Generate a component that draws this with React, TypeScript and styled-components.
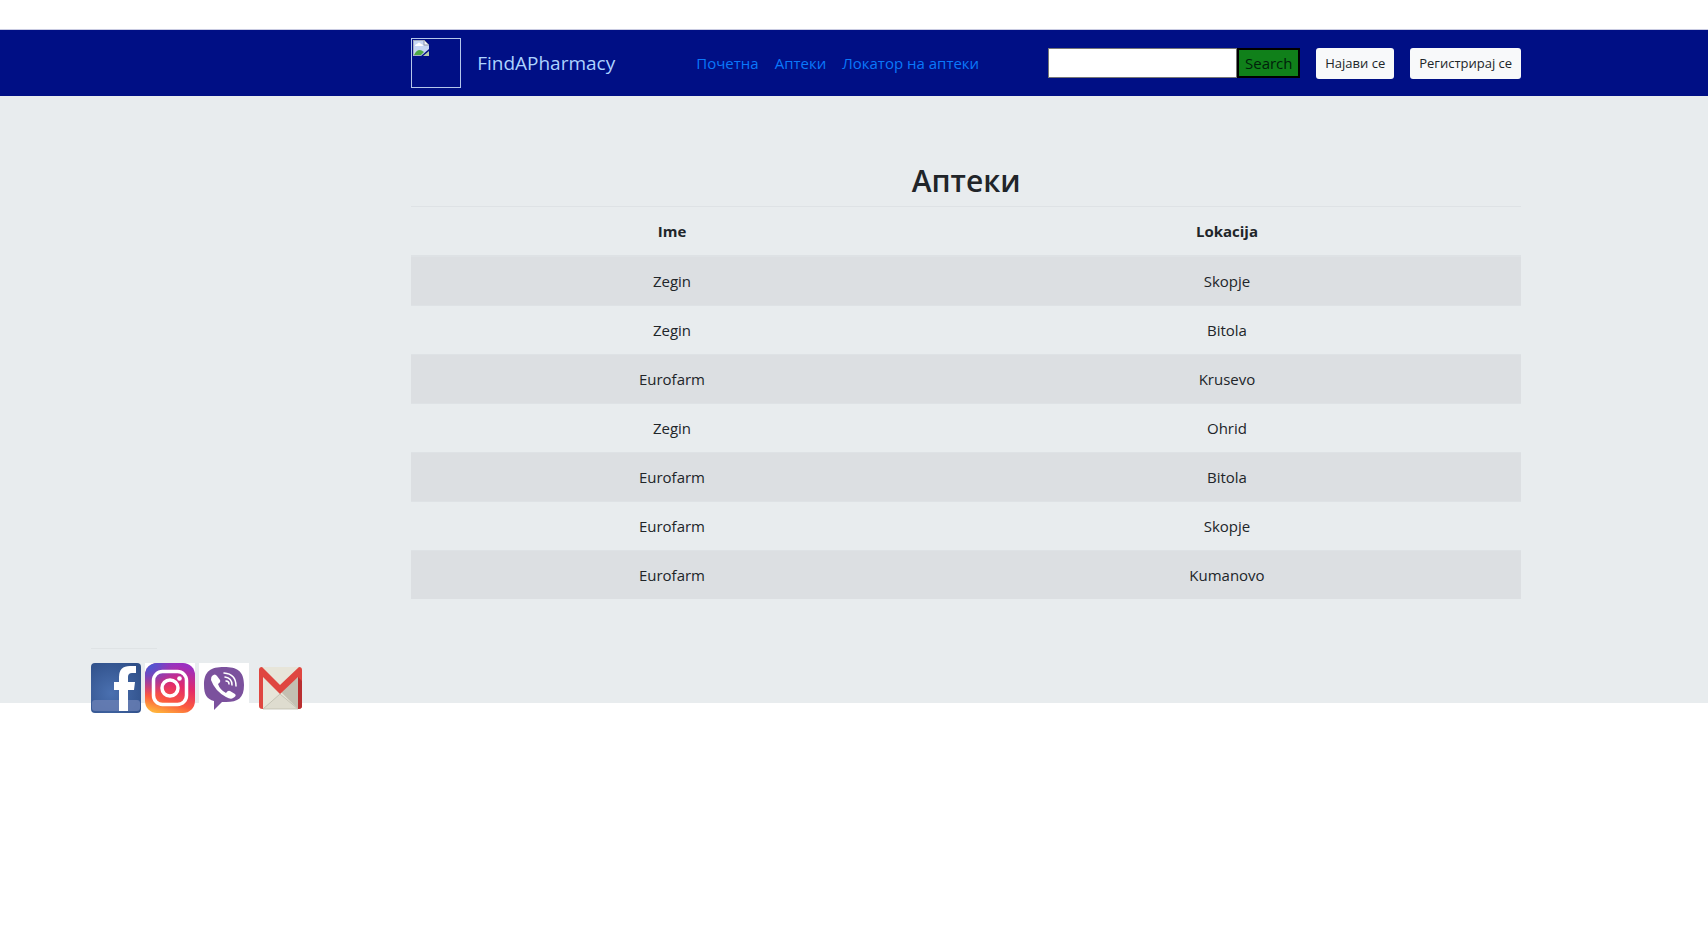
import React from "react";
import styled, { createGlobalStyle } from "styled-components";

const GlobalStyle = createGlobalStyle`
  *, *::before, *::after { box-sizing: border-box; }
  body {
    margin: 0;
    background: #fff;
    color: #212529;
    font-family: "Segoe UI", "Open Sans", sans-serif;
    font-size: 15px;
    line-height: 24px;
  }
`;

const Page = styled.div`
  padding-top: 29px;
`;

const Columns = styled.div`
  display: grid;
  grid-template-columns: 11fr minmax(0, 1110px) 5fr;
  & > * { grid-column: 2; }
`;

const Navbar = styled(Columns).attrs({ as: "header" })`
  padding: 8px 0;
  background: #000f85;
  border-top: 1px solid #c9cbe2;
`;

const NavContent = styled.div`
  display: flex;
  align-items: center;
  justify-content: space-between;
`;

const Brand = styled.a`
  display: flex;
  align-items: center;
  gap: 16px;
  margin-right: 12px;
  color: #add3ff;
  font-size: 19px;
  text-decoration: none;
`;

const BrandImage = styled.span`
  width: 50px;
  height: 50px;
  padding: 1px;
  border: 1px solid #b4c6ea;
  svg { display: block; }
`;

const NavList = styled.ul`
  display: flex;
  gap: 16px;
  margin: 0;
  padding: 0;
  list-style: none;
`;

const NavLink = styled.a`
  color: #0a78fa;
  text-decoration: none;
`;

const Actions = styled.div`
  display: flex;
  align-items: flex-start;
  gap: 16px;
`;

const SearchForm = styled.form`
  display: flex;
`;

const SearchInput = styled.input`
  width: 189px;
  height: 30px;
  border: 1px solid #767676;
  border-radius: 0;
  background: #fff;
  font: inherit;
`;

const SearchButton = styled.button`
  width: 63px;
  height: 30px;
  padding: 0;
  border: 2px solid #000;
  background: #10801a;
  color: #00210a;
  font: inherit;
`;

const LightButton = styled.button`
  height: 31px;
  padding: 0 9px;
  border: 0;
  border-radius: 3px;
  background: #f8f9fa;
  color: #212529;
  font: inherit;
  font-size: 13px;
`;

const Main = styled(Columns).attrs({ as: "main" })`
  padding: 64px 0 104px;
  background: #e8ecee;
`;

const Title = styled.h2`
  margin: 0 0 4px;
  font-size: 30px;
  font-weight: 600;
  line-height: 42px;
  text-align: center;
`;

const Table = styled.table`
  width: 100%;
  border-collapse: separate;
  border-spacing: 0;
  text-align: center;
  th, td {
    padding: 12px;
    border-top: 1px solid #dee2e5;
  }
  th:first-child { width: 47%; }
  thead th { border-bottom: 1px solid #dee2e5; }
  tbody tr:nth-child(odd) { background: #dcdfe2; }
`;

const Footer = styled.footer`
  margin: -55px 0 0 91px;
`;

const Rule = styled.hr`
  width: 66px;
  margin: 0 0 14px;
  border: 0;
  border-top: 1px solid #dfe3e5;
`;

const Social = styled.nav`
  display: flex;
  gap: 4px;
  a, svg { display: block; }
`;

const pharmacies = [
  ["Zegin", "Skopje"],
  ["Zegin", "Bitola"],
  ["Eurofarm", "Krusevo"],
  ["Zegin", "Ohrid"],
  ["Eurofarm", "Bitola"],
  ["Eurofarm", "Skopje"],
  ["Eurofarm", "Kumanovo"],
];

const MissingImageIcon = () => (
  <svg width="16" height="16" viewBox="0 0 16 16" aria-hidden="true">
    <path d="M0 0H11L16 5V9L8 16H0Z" fill="#c6d7f3" />
    <path d="M2 6Q2 4 4 4Q6 1 8 4Q10 4 10 6Z" fill="#fff" />
    <path d="M1 15Q5 7 11 12L8 15Z" fill="#4faa45" />
    <path d="M11 0V5H16Z" fill="#f4f6fb" stroke="#8f98a8" />
    <path d="M16 11V16H10Z" fill="#b5cba8" />
    <path d="M0.500 0V15.500H8M0 0.500H11" fill="none" stroke="#a5aec0" />
  </svg>
);

const FacebookIcon = () => (
  <svg width="50" height="50" viewBox="0 0 50 50" aria-hidden="true">
    <defs>
      <radialGradient id="fb" cx="0.4" cy="0.6" r="0.75">
        <stop offset="0" stopColor="#4a70b0" />
        <stop offset="1" stopColor="#2f4f88" />
      </radialGradient>
    </defs>
    <rect width="50" height="50" rx="4" fill="url(#fb)" />
    <rect x="1" y="37" width="48" height="11" rx="3" fill="#6a80b4" opacity="0.8" />
    <path d="M28 48V27H23V19H28V14Q28 3 39 3H45V10H41Q37 10 37 14V19H44L43 27H37V48Z" fill="#fff" />
  </svg>
);

const InstagramIcon = () => (
  <svg width="50" height="50" viewBox="0 0 50 50" aria-hidden="true">
    <defs>
      <linearGradient id="ig" x1="0.3" y1="1" x2="0.6" y2="0">
        <stop offset="0" stopColor="#ffb13b" />
        <stop offset="0.25" stopColor="#fb5a3f" />
        <stop offset="0.6" stopColor="#e32a6b" />
        <stop offset="1" stopColor="#9b2fc0" />
      </linearGradient>
      <radialGradient id="igBlue" cx="0.05" cy="0" r="0.65">
        <stop offset="0" stopColor="#3c5fd8" />
        <stop offset="0.4" stopColor="#5a4fd0" stopOpacity="0.8" />
        <stop offset="1" stopColor="#8a3ac8" stopOpacity="0" />
      </radialGradient>
    </defs>
    <rect width="50" height="50" fill="#fff" />
    <rect width="50" height="50" rx="12" fill="url(#ig)" />
    <rect width="50" height="50" rx="12" fill="url(#igBlue)" />
    <rect x="8.500" y="8.500" width="33" height="33" rx="9" fill="none" stroke="#fff" strokeWidth="3.500" />
    <circle cx="25" cy="25" r="8" fill="none" stroke="#fff" strokeWidth="3.500" />
    <circle cx="34.500" cy="15.500" r="2.300" fill="#fff" />
  </svg>
);

const ViberIcon = () => (
  <svg width="50" height="50" viewBox="0 0 50 50" aria-hidden="true">
    <rect width="50" height="50" fill="#fff" />
    <path d="M25 4C38 4 45 8 45 22C45 35 39 39 27 39H23L15 47V38C8 36 5 32 5 22C5 8 12 4 25 4Z" fill="#7b519d" />
    <path d="M13 13Q16 10 18 13L21 17Q22 19 19 21Q21 27 27 30Q29 27 31 28L36 31Q38 33 34 35Q32 37 27 34Q16 28 12 17Q12 14 13 13Z" fill="#fff" />
    <path d="M25 10Q37 11 37 23M26 14Q33 15 33 22M27 18Q30 18 30 21" fill="none" stroke="#fff" strokeWidth="1.500" strokeLinecap="round" />
  </svg>
);

const GmailIcon = () => (
  <svg width="50" height="50" viewBox="1 0 46 50" preserveAspectRatio="xMaxYMid meet" aria-hidden="true">
    <rect x="3" y="4" width="43" height="42" rx="3" fill="#e7e5d9" />
    <path d="M24 28L42 14V46Z" fill="#c3c0b2" />
    <path d="M7 46L24 31L42 46Z" fill="#dedccf" stroke="#bdbbac" strokeWidth="0.800" />
    <path d="M3 7Q3 4 6 4L24 22L43 4Q46 4 46 7V43Q46 46 42 46V14L24 31L7 14V46Q3 46 3 43Z" fill="#df4640" />
    <path d="M42 14L46 18V43Q46 46 42 46Z" fill="#b92f30" />
  </svg>
);

export default function App() {
  return (
    <Page>
      <GlobalStyle />
      <Navbar>
        <NavContent>
          <Brand href="#">
            <BrandImage><MissingImageIcon /></BrandImage>
            FindAPharmacy
          </Brand>
          <NavList>
            <li><NavLink href="#">Почетна</NavLink></li>
            <li><NavLink href="#">Аптеки</NavLink></li>
            <li><NavLink href="#">Локатор на аптеки</NavLink></li>
          </NavList>
          <Actions>
            <SearchForm>
              <SearchInput type="text" aria-label="Search" />
              <SearchButton type="button">Search</SearchButton>
            </SearchForm>
            <LightButton type="button">Најави се</LightButton>
            <LightButton type="button">Регистрирај се</LightButton>
          </Actions>
        </NavContent>
      </Navbar>
      <Main>
        <Title>Аптеки</Title>
        <Table>
          <thead>
            <tr><th scope="col">Ime</th><th scope="col">Lokacija</th></tr>
          </thead>
          <tbody>
            {pharmacies.map(([name, city], i) => (
              <tr key={i}><td>{name}</td><td>{city}</td></tr>
            ))}
          </tbody>
        </Table>
      </Main>
      <Footer>
        <Rule />
        <Social aria-label="Social">
          <a href="#" aria-label="Facebook"><FacebookIcon /></a>
          <a href="#" aria-label="Instagram"><InstagramIcon /></a>
          <a href="#" aria-label="Viber"><ViberIcon /></a>
          <a href="#" aria-label="Gmail"><GmailIcon /></a>
        </Social>
      </Footer>
    </Page>
  );
}
